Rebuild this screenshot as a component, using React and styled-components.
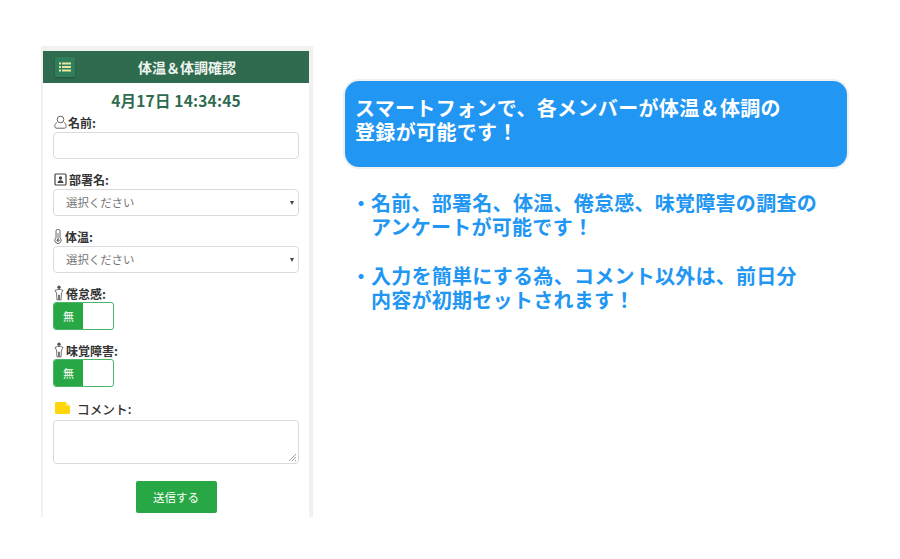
import React from "react";
import styled, { createGlobalStyle } from "styled-components";

const Global = createGlobalStyle`
  html, body { margin: 0; padding: 0; background: #fff; }
  body { font-family: "Noto Sans CJK JP", "Noto Sans", sans-serif; }
`;

const Page = styled.div`
  width: 900px;
  height: 559px;
  display: flex;
  align-items: flex-start;
  overflow: hidden;
`;

const Phone = styled.section`
  box-sizing: border-box;
  width: 272px;
  height: 471px;
  margin: 46px 0 0 41px;
  border: solid #f1f1f1;
  border-width: 5px 4px 0 2px;
  overflow: hidden;
  display: flex;
  flex-direction: column;
  flex: none;
`;

const Header = styled.header`
  height: 32px;
  flex: none;
  background: #2f6b4f;
  display: flex;
  align-items: center;
  padding-left: 12px;
  position: relative;
`;

const MenuButton = styled.div`
  width: 20px;
  height: 20px;
  border-radius: 2px;
  background: #2f7f5c;
  box-shadow: 0 1px 2px rgba(0, 0, 0, 0.25);
  display: flex;
  align-items: center;
  justify-content: center;
`;

const Title = styled.h1`
  margin: 0;
  position: absolute;
  left: 0;
  right: 0;
  text-align: center;
  font-size: 14px;
  line-height: 32px;
  font-weight: 700;
  color: #eef5ef;
  pointer-events: none;
  padding-left: 22px;
`;

const Form = styled.div`
  padding: 0 10px;
  display: flex;
  flex-direction: column;
  color: #333;
`;

const Clock = styled.div`
  margin-top: 8px;
  text-align: center;
  font-size: 15.5px;
  line-height: 19px;
  font-weight: 700;
  color: #2f6b4f;
  letter-spacing: 0.2px;
`;

const Label = styled.label`
  display: flex;
  align-items: center;
  gap: ${(p) => p.$gap ?? 2}px;
  height: 18px;
  margin-top: ${(p) => p.$top}px;
  font-size: ${(p) => p.$size || 12}px;
  font-weight: ${(p) => p.$weight || 700};
  color: #333;
  white-space: nowrap;
`;

const IconSlot = styled.span`
  width: ${(p) => p.$w || 14}px;
  display: flex;
  align-items: center;
  justify-content: center;
  flex: none;
  margin-left: ${(p) => p.$left || 0}px;
`;

const TextField = styled.div`
  box-sizing: border-box;
  height: 27px;
  margin-top: 1px;
  width: 246px;
  background: #fff;
  border: 1px solid #d9dcdf;
  border-radius: 4px;
`;

const Select = styled(TextField)`
  display: flex;
  align-items: center;
  justify-content: space-between;
  padding: 0 4px 2px 12px;
  font-size: 11.4px;
  color: #777;
`;

const Caret = styled.span`
  width: 0;
  height: 0;
  margin-top: 2px;
  border-left: 2px solid transparent;
  border-right: 2px solid transparent;
  border-top: 4px solid #444;
`;

const Toggle = styled.div`
  box-sizing: border-box;
  width: 61px;
  height: 28px;
  display: flex;
  border: 1px solid #4cb56a;
  border-radius: 3px;
  overflow: hidden;
`;

const ToggleOn = styled.span`
  width: 29px;
  background: #28a745;
  color: #fff;
  font-size: 11px;
  display: flex;
  align-items: center;
  justify-content: center;
`;

const TextArea = styled(TextField)`
  height: 44px;
  margin-top: 3px;
  position: relative;
`;

const Grip = styled.svg`
  position: absolute;
  right: 1px;
  bottom: 1px;
`;

const Submit = styled.button`
  align-self: center;
  width: 81px;
  height: 32px;
  margin-top: 17px;
  border: none;
  border-radius: 2px;
  background: #28a745;
  color: #fff;
  font-family: inherit;
  font-size: 11.5px;
`;

const Side = styled.div`
  margin: 79px 0 0 30px;
  width: 506px;
  flex: none;
  font-family: "Liberation Sans", "Noto Sans CJK JP", sans-serif;
`;

const Banner = styled.div`
  box-sizing: border-box;
  width: 506px;
  height: 90px;
  padding: 16px 10px 0;
  background: #2196f3;
  border: 2px solid #f0f0f0;
  border-radius: 16px;
  color: #fff;
  font-size: 20px;
  line-height: 24px;
  font-weight: 700;
  letter-spacing: 0.35px;
`;

const Note = styled.div`
  margin: ${(p) => p.$top}px 0 0 8px;
  display: flex;
  color: #2196f3;
  font-size: 20px;
  line-height: 24px;
  font-weight: 700;
  letter-spacing: 0.27px;
`;

const Bullet = styled.span`
  width: 20px;
  flex: none;
`;

const UserIcon = () => (
  <svg width="13" height="14" viewBox="0 0 13 14" fill="none" stroke="#666" strokeWidth="1">
    <circle cx="6.5" cy="4.5" r="3.3" />
    <path d="M2.8 7.5C1.3 8.6.8 10 .8 11.3c0 1.2.8 1.9 2 1.9h7.4c1.200 0 2-.7 2-1.900 0-1.300-.5-2.700-2-3.800" />
  </svg>
);

const BadgeIcon = () => (
  <svg width="13" height="13" viewBox="0 0 13 13">
    <rect x="1" y="1" width="11" height="11" rx="1" fill="#fff" stroke="#444" strokeWidth="1.200" />
    <circle cx="6.500" cy="5" r="1.700" fill="#444" />
    <path d="M3.500 10c0-2 1.300-2.800 3-2.800s3 .8 3 2.800z" fill="#444" />
  </svg>
);

const ThermoIcon = () => (
  <svg width="10" height="15" viewBox="0 0 10 15" fill="none" stroke="#666" strokeWidth="1">
    <path d="M3 2.200a2 2 0 0 1 4 0v6.600a3.200 3.200 0 1 1-4 0z" />
    <circle cx="5" cy="11.300" r="1.500" fill="#777" stroke="none" />
    <path d="M5 4v6" stroke="#777" />
  </svg>
);

const PersonIcon = () => (
  <svg width="10" height="16" viewBox="0 0 10 16" fill="none" stroke="#666" strokeWidth="0.900">
    <circle cx="5" cy="2.200" r="1.700" fill="#555" stroke="none" />
    <path d="M1 5.500 3.400 4.500h3.200L9 5.500 7.500 8 7 15H5.500V10h-1v5H3L2.500 8z" />
  </svg>
);

const NoteIcon = () => (
  <svg width="15" height="12" viewBox="0 0 15 12">
    <path d="M1.500 0H10.500L15 4V10.500a1.500 1.500 0 0 1-1.500 1.500H1.500A1.500 1.500 0 0 1 0 10.500V1.500A1.500 1.500 0 0 1 1.500 0z" fill="#ffd60a" />
    <path d="M10.500 0 15 4H10.500z" fill="#ffe873" />
  </svg>
);

const ListIcon = () => (
  <svg width="12" height="10" viewBox="0 0 12 10" fill="#e9e6a0">
    <rect x="0" y="0.500" width="2" height="2" />
    <rect x="0" y="4" width="2" height="2" />
    <rect x="0" y="7.500" width="2" height="2" />
    <rect x="3" y="0.500" width="9" height="2" />
    <rect x="3" y="4" width="9" height="2" />
    <rect x="3" y="7.500" width="9" height="2" />
  </svg>
);

export default function App() {
  return (
    <Page>
      <Global />
      <Phone>
        <Header>
          <MenuButton>
            <ListIcon />
          </MenuButton>
          <Title>体温＆体調確認</Title>
        </Header>
        <Form>
          <Clock>4月17日 14:34:45</Clock>
          <Label $top={3} $gap={1}>
            <IconSlot><UserIcon /></IconSlot>名前:
          </Label>
          <TextField />
          <Label $top={11}>
            <IconSlot><BadgeIcon /></IconSlot>部署名:
          </Label>
          <Select>選択ください<Caret /></Select>
          <Label $top={11}>
            <IconSlot $w={10}><ThermoIcon /></IconSlot>体温:
          </Label>
          <Select>選択ください<Caret /></Select>
          <Label $top={11}>
            <IconSlot $w={11}><PersonIcon /></IconSlot>倦怠感:
          </Label>
          <Toggle><ToggleOn>無</ToggleOn></Toggle>
          <Label $top={11}>
            <IconSlot $w={11}><PersonIcon /></IconSlot>味覚障害:
          </Label>
          <Toggle><ToggleOn>無</ToggleOn></Toggle>
          <Label $top={12} $gap={7} $weight={500} $size={12.7}>
            <IconSlot $w={15} $left={2}><NoteIcon /></IconSlot>コメント:
          </Label>
          <TextArea>
            <Grip width="9" height="9" viewBox="0 0 9 9" stroke="#888" strokeWidth="0.800">
              <path d="M1 8 8 1M4 8l4-4M7 8l1-1" />
            </Grip>
          </TextArea>
          <Submit>送信する</Submit>
        </Form>
      </Phone>
      <Side>
        <Banner>
          スマートフォンで、各メンバーが体温＆体調の<br />登録が可能です！
        </Banner>
        <Note $top={23}>
          <Bullet>・</Bullet>
          <div>名前、部署名、体温、倦怠感、味覚障害の調査の<br />アンケートが可能です！</div>
        </Note>
        <Note $top={25}>
          <Bullet>・</Bullet>
          <div>入力を簡単にする為、コメント以外は、前日分<br />内容が初期セットされます！</div>
        </Note>
      </Side>
    </Page>
  );
}
